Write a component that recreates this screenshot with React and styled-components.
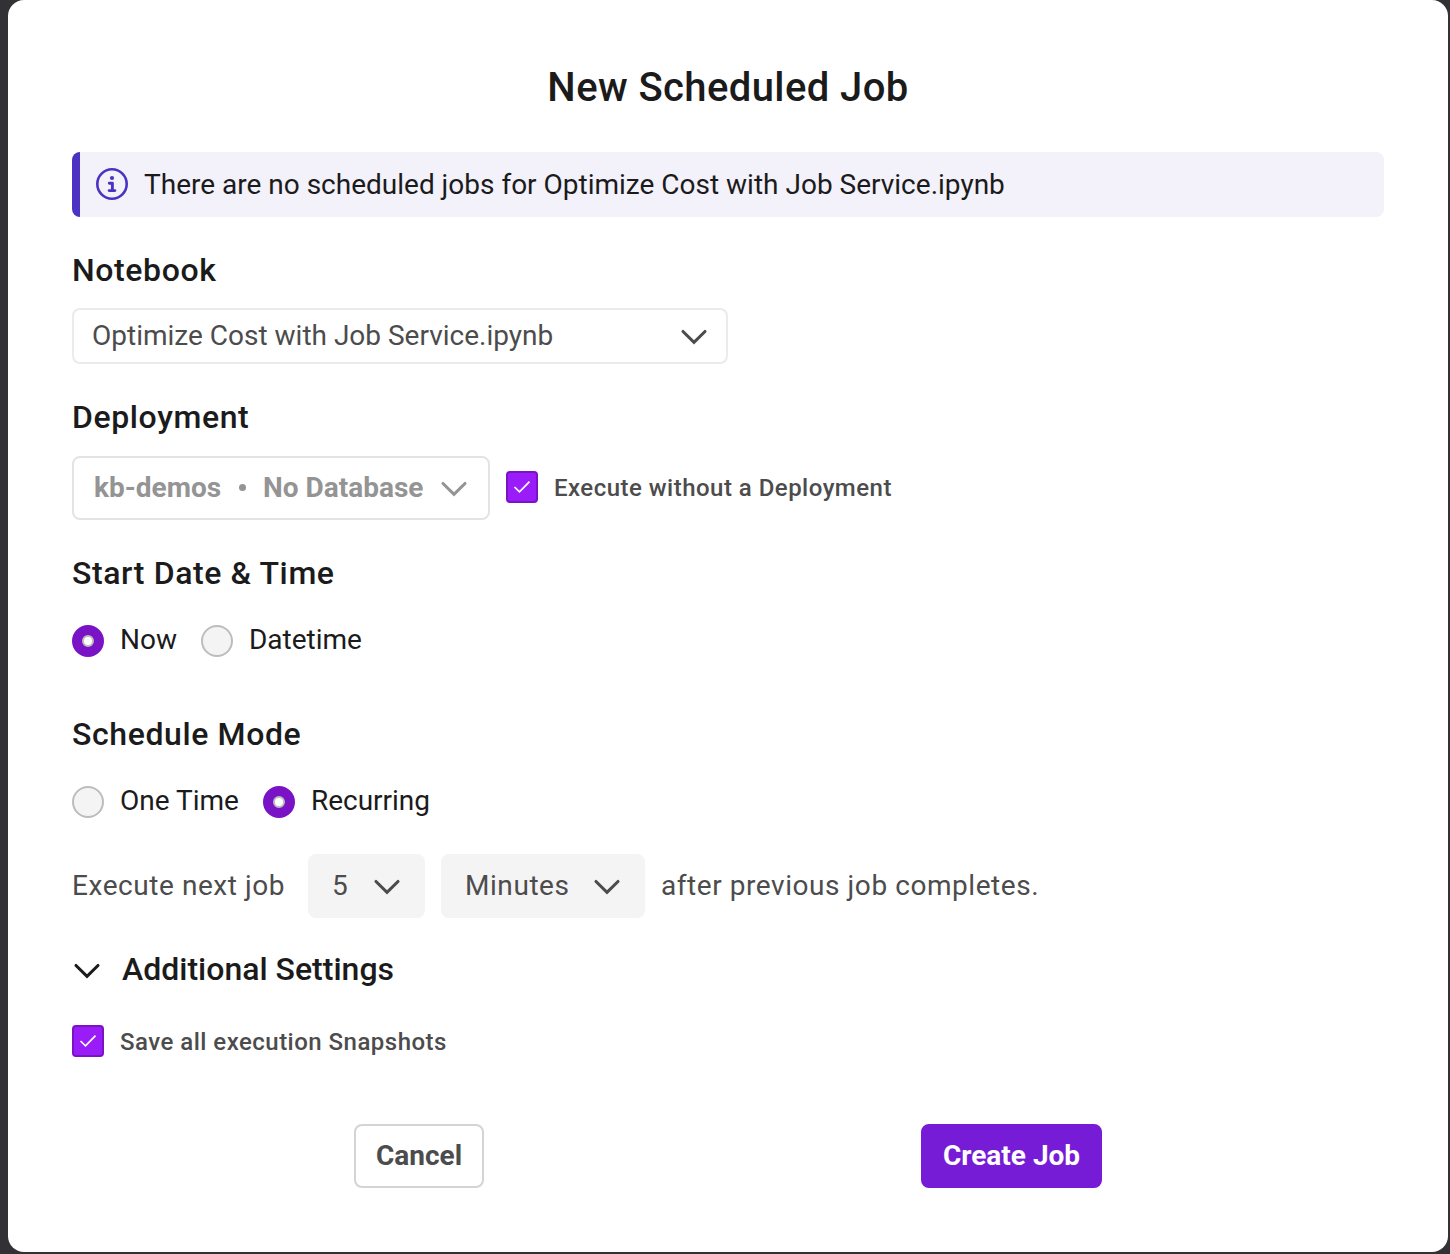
import React from "react";
import styled, { createGlobalStyle } from "styled-components";

const GlobalStyle = createGlobalStyle`
  *, *::before, *::after { box-sizing: border-box; }
  body {
    margin: 0;
    background: #323135;
    font-family: Roboto, "Liberation Sans", sans-serif;
    color: #1b1b1c;
  }
  button { font-family: inherit; cursor: pointer; }
`;

const Backdrop = styled.div`
  height: 1254px;
  padding: 0 2px 2px 8px;
  background: #323135;
  overflow: hidden;
`;

const Modal = styled.main`
  display: flex;
  flex-direction: column;
  height: 1252px;
  padding: 64px 64px 0;
  border-radius: 16px;
  background: #fff;
  white-space: nowrap;
`;

const Title = styled.h1`
  margin: 0 0 40px;
  font-size: 40px;
  line-height: 48px;
  font-weight: 500;
  letter-spacing: 0.01em;
  text-align: center;
`;

const Banner = styled.div`
  display: flex;
  align-items: flex-start;
  gap: 16px;
  height: 65px;
  padding: 16px 0 0 16px;
  border-left: 8px solid #4b32c3;
  border-radius: 8px;
  background: #f3f1fa;
  font-size: 28px;
  line-height: 33px;
`;

const Section = styled.section`
  margin-top: ${(p) => p.$top}px;
`;

const Heading = styled.h2`
  margin: 0 0 ${(p) => p.$bottom}px;
  font-size: 32px;
  line-height: 40px;
  font-weight: 500;
  letter-spacing: 0.019em;
`;

const Row = styled.div`
  display: flex;
  align-items: center;
  gap: ${(p) => p.$gap || 16}px;
`;

const SelectBox = styled.button`
  display: flex;
  align-items: center;
  justify-content: space-between;
  width: 656px;
  height: 56px;
  padding: 0 17px 2px 18px;
  border: 2px solid #ebebeb;
  border-radius: 8px;
  background: #fff;
  color: #4c4c4d;
  font-size: 28px;

  svg { margin-top: 4px; }
`;

const DeploymentBox = styled(SelectBox)`
  justify-content: flex-start;
  gap: 17.5px;
  width: 418px;
  height: 64px;
  padding: 0 19px 2px 20px;
  border-color: #e3e3e3;
  color: #949494;
  font-weight: 700;

  svg { margin-left: -2px; }
`;

const Dot = styled.span`
  flex: none;
  width: 7px;
  height: 7px;
  border-radius: 50%;
  background: currentColor;
`;

const FilledSelect = styled(SelectBox)`
  width: ${(p) => p.$width}px;
  height: 64px;
  padding: 0 23px 2px 24px;
  border: 0;
  background: #f4f4f4;
  letter-spacing: 0.02em;
`;

const Choice = styled.label`
  display: flex;
  align-items: center;
  gap: 16px;
  font-size: 28px;
  line-height: 32px;
`;

const RadioMark = styled.span`
  display: grid;
  place-items: center;
  width: 32px;
  height: 32px;
  border-radius: 50%;
  border: 2px solid ${(p) => (p.$on ? "#7a13c6" : "#bdbdbd")};
  background: ${(p) => (p.$on ? "#7a13c6" : "#f4f4f4")};

  &::after {
    content: "";
    display: ${(p) => (p.$on ? "block" : "none")};
    width: 12px;
    height: 12px;
    border: 2px solid #bdbdbd;
    border-radius: 50%;
    background: #fff;
  }
`;

const ChoiceText = styled.span`
  margin-top: -3px;
`;

const CheckMark = styled.span`
  display: grid;
  place-items: center;
  width: 32px;
  height: 32px;
  border: 2px solid #7a13c6;
  border-radius: 4px;
  background: #9a1cf8;
`;

const CheckLabel = styled.label`
  display: flex;
  align-items: flex-start;
  gap: 16px;
  height: 34px;
  margin-top: ${(p) => p.$top || 0}px;
  color: #4c4c4d;
  font-size: 24px;
  line-height: 34px;
  font-weight: 500;
  letter-spacing: 0.02em;
`;

const Interval = styled.div`
  display: flex;
  align-items: center;
  gap: 16px;
  margin-top: 36px;
  color: #4c4c4d;
  font-size: 28px;
  letter-spacing: 0.02em;
`;

const IntervalText = styled.span`
  width: ${(p) => (p.$width ? `${p.$width}px` : "auto")};
  padding-bottom: 2px;
`;

const Disclosure = styled.div`
  display: flex;
  align-items: center;
  gap: 20px;
  margin-top: 31px;
  font-size: 32px;
  line-height: 40px;
  font-weight: 500;
`;

const Actions = styled.footer`
  display: flex;
  justify-content: space-between;
  margin-top: 65px;
  padding: 0 282px;
`;

const Button = styled.button`
  width: ${(p) => p.$width}px;
  height: 64px;
  padding: 0 0 2px;
  border: 2px solid ${(p) => (p.$primary ? "#761cd6" : "#d4d4d4")};
  border-radius: 8px;
  background: ${(p) => (p.$primary ? "#761cd6" : "#fff")};
  color: ${(p) => (p.$primary ? "#fff" : "#4c4c4d")};
  font-size: 28px;
  font-weight: 700;
`;

const ChevronSvg = styled.svg`
  flex: none;
  margin-top: 3px;
`;

function Chevron() {
  return (
    <ChevronSvg width="30" height="20" viewBox="0 0 30 20" fill="none">
      <path d="M4 4.5 15 15.3 26 4.5" stroke="currentColor" strokeWidth="3.1" strokeLinecap="round" />
    </ChevronSvg>
  );
}

function InfoIcon() {
  return (
    <svg width="32" height="32" viewBox="0 0 32 32" fill="none">
      <circle cx="16" cy="16" r="14.7" stroke="#4b32c3" strokeWidth="2.6" />
      <circle cx="16" cy="10" r="2.1" fill="#4b32c3" />
      <path d="M13.3 15.3h3.1v7.2M13.1 22.6h5.8" stroke="#4b32c3" strokeWidth="2.9" strokeLinecap="round" strokeLinejoin="round" />
    </svg>
  );
}

function Radio({ on, children }) {
  return (
    <Choice>
      <RadioMark $on={on} />
      <ChoiceText>{children}</ChoiceText>
    </Choice>
  );
}

function Check({ top, children }) {
  return (
    <CheckLabel $top={top}>
      <CheckMark>
        <svg width="28" height="28" viewBox="0 0 28 28" fill="none">
          <path d="M6.5 14 11.5 18.8 21.5 8.6" stroke="#fff" strokeWidth="1.7" />
        </svg>
      </CheckMark>
      <span>{children}</span>
    </CheckLabel>
  );
}

export default function App() {
  return (
    <>
      <GlobalStyle />
      <Backdrop>
        <Modal>
          <Title>New Scheduled Job</Title>
          <Banner>
            <InfoIcon />
            <span>There are no scheduled jobs for Optimize Cost with Job Service.ipynb</span>
          </Banner>

          <Section $top={33}>
            <Heading $bottom={18}>Notebook</Heading>
            <SelectBox>
              <span>Optimize Cost with Job Service.ipynb</span>
              <Chevron />
            </SelectBox>
          </Section>

          <Section $top={33}>
            <Heading $bottom={19}>Deployment</Heading>
            <Row>
              <DeploymentBox>
                <span>kb-demos</span>
                <Dot />
                <span>No Database</span>
                <Chevron />
              </DeploymentBox>
              <Check>Execute without a Deployment</Check>
            </Row>
          </Section>

          <Section $top={33}>
            <Heading $bottom={32}>Start Date &amp; Time</Heading>
            <Row $gap={24}>
              <Radio on>Now</Radio>
              <Radio>Datetime</Radio>
            </Row>
          </Section>

          <Section $top={57}>
            <Heading $bottom={32}>Schedule Mode</Heading>
            <Row $gap={24}>
              <Radio>One Time</Radio>
              <Radio on>Recurring</Radio>
            </Row>
            <Interval>
              <IntervalText $width={220}>Execute next job</IntervalText>
              <FilledSelect $width={117}>
                <span>5</span>
                <Chevron />
              </FilledSelect>
              <FilledSelect $width={204}>
                <span>Minutes</span>
                <Chevron />
              </FilledSelect>
              <IntervalText>after previous job completes.</IntervalText>
            </Interval>
          </Section>

          <Disclosure>
            <Chevron />
            <span>Additional Settings</span>
          </Disclosure>
          <Check top={36}>Save all execution Snapshots</Check>

          <Actions>
            <Button $width={130}>Cancel</Button>
            <Button $width={181} $primary>Create Job</Button>
          </Actions>
        </Modal>
      </Backdrop>
    </>
  );
}
